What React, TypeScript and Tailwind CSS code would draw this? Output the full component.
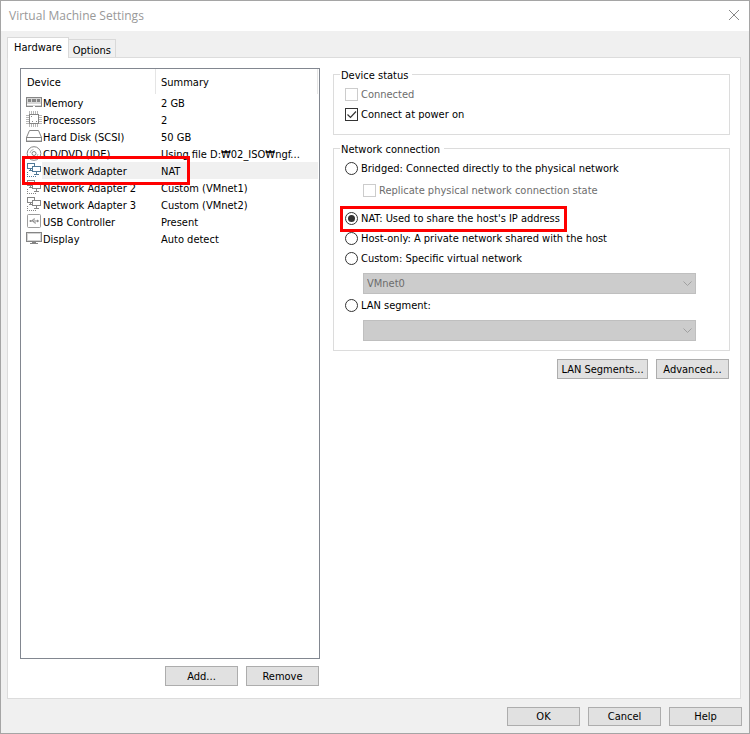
import { useState } from "react";
import type { ReactNode } from "react";
import clsx from "clsx";

function Icon({ children, active }: { children: ReactNode; active?: boolean }) {
  return (
    <svg
      viewBox="0 0 16 16"
      className={clsx("block h-4 w-4 shrink-0", active ? "text-[#4f7896]" : "text-[#858585]")}
      fill="none"
      stroke="currentColor"
      shapeRendering="crispEdges"
      aria-hidden="true"
    >
      {children}
    </svg>
  );
}

const memoryIcon = (
  <>
    <path d="M0.5 3.5h15v9H0.5z" fill="#d8d8d8" />
    <path d="M2 5h3v3H2zM6 5h4v3H6zM11 5h3v3h-3z" fill="currentColor" stroke="none" />
    <path d="M1 10.5h14" stroke="white" />
    <path d="M7 12.5h2" stroke="white" />
  </>
);

const processorIcon = (
  <>
    <path d="M3.5 3.5h9v9h-9z" />
    <path d="M3.5 0v3M5.5 0v3M7.5 0v3M9.5 0v3M11.5 0v3M3.5 13v3M5.5 13v3M7.5 13v3M9.5 13v3M11.5 13v3" strokeOpacity="0.6" />
    <path d="M0 4.5h3M0 6.5h3M0 8.5h3M0 10.5h3M0 12.5h3M13 4.5h3M13 6.5h3M13 8.5h3M13 10.5h3M13 12.5h3" strokeOpacity="0.6" />
    <path d="M5 5.5h1M10 10.5h1M6 10.5h1" />
  </>
);

const diskIcon = (
  <>
    <path d="M3.5 2.5h9l3 7h-15z" shapeRendering="auto" />
    <path d="M0.5 9.5h15v4H0.5z" />
    <path d="M1 12.5h14" strokeOpacity="0.4" />
  </>
);

const discIcon = (
  <g shapeRendering="auto">
    <circle cx="8" cy="8.5" r="6.8" />
    <circle cx="8" cy="8.5" r="2" />
    <path d="M4 8a4 4 0 0 1 3.5-3.5M12 9a4 4 0 0 1-3.5 3.5" strokeOpacity="0.6" />
  </g>
);

const networkIcon = (
  <>
    <path d="M1.5 1.5h7v5h-7z" />
    <path d="M4.5 7v2M3 8.5h3" />
    <path d="M6.5 4.5h8v5h-8z" fill="white" />
    <path d="M10.5 10v2M8 12.5h5" />
    <path d="M1.5 10v5M1 14.5h9" strokeDasharray="1 1" />
  </>
);

const usbIcon = (
  <>
    <rect x="1.5" y="1.5" width="13" height="13" rx="1" shapeRendering="auto" strokeOpacity="0.8" />
    <g shapeRendering="auto">
      <path d="M4 8h8.5M6 8l1.5-2H9M7 8l1.5 2H10" />
      <circle cx="4.5" cy="8" r="1" fill="currentColor" stroke="none" />
      <path d="M11 6.5L13 8l-2 1.5z" fill="currentColor" stroke="none" />
    </g>
  </>
);

const displayIcon = (
  <>
    <path d="M0.5 2.5h15v9H0.5z" />
    <path d="M1.5 3.5h13v7h-13z" strokeOpacity="0.35" />
    <path d="M6 12.5h4M4 13.5h8" />
  </>
);

const devices = [
  { name: "Memory", summary: "2 GB", icon: memoryIcon },
  { name: "Processors", summary: "2", icon: processorIcon },
  { name: "Hard Disk (SCSI)", summary: "50 GB", icon: diskIcon },
  { name: "CD/DVD (IDE)", summary: "Using file D:₩02_ISO₩ngf...", icon: discIcon },
  { name: "Network Adapter", summary: "NAT", icon: networkIcon },
  { name: "Network Adapter 2", summary: "Custom (VMnet1)", icon: networkIcon },
  { name: "Network Adapter 3", summary: "Custom (VMnet2)", icon: networkIcon },
  { name: "USB Controller", summary: "Present", icon: usbIcon },
  { name: "Display", summary: "Auto detect", icon: displayIcon },
];

// Red frame that points out a setting
function Highlight({ className }: { className: string }) {
  return (
    <div
      className={clsx("pointer-events-none absolute border-3 border-[#ff0000]", className)}
      aria-hidden="true"
    />
  );
}

type ButtonProps = { children: ReactNode; className?: string };

function Button({ children, className = "h-5 w-[73px]" }: ButtonProps) {
  return (
    <button
      type="button"
      className={clsx(
        "flex items-center justify-center border border-[#adadad] bg-[#e1e1e1] whitespace-nowrap",
        className
      )}
    >
      {children}
    </button>
  );
}

function DeviceList() {
  const [selected, setSelected] = useState("Network Adapter");

  return (
    <div className="relative flex-1 border border-[#828790] bg-white">
      <table className="w-full table-fixed border-separate border-spacing-0 text-left leading-[15px]">
        <thead>
          <tr className="h-[25px]">
            <th className="w-[135px] border-r border-[#e5e5e5] p-0 pt-0.5 pl-1.5 font-normal">Device</th>
            <th className="border-r border-[#e5e5e5] p-0 pt-0.5 pl-[5px] font-normal">Summary</th>
            <th className="w-px p-0" />
          </tr>
        </thead>
        <tbody>
          {devices.map((d) => {
            const active = d.name === selected;
            return (
              <tr key={d.name} className="h-[17px]" onClick={() => setSelected(d.name)}>
                <td className="p-0 pl-[5px]">
                  <div className="flex items-start">
                    <Icon active={active}>{d.icon}</Icon>
                    <span
                      className={clsx("flex-1 pt-0.5 pl-px whitespace-nowrap", active && "bg-[#f0f0f0]")}
                    >
                      {d.name}
                    </span>
                  </div>
                </td>
                <td
                  className={clsx(
                    "overflow-hidden p-0 pt-0.5 pl-[5px] whitespace-nowrap",
                    active && "bg-[#f0f0f0]"
                  )}
                >
                  {d.summary}
                </td>
                <td className="p-0" />
              </tr>
            );
          })}
        </tbody>
      </table>
      <Highlight className="top-[87px] left-px h-[29px] w-[168px]" />
    </div>
  );
}

function CheckBox({ label, checked, disabled }: { label: string; checked?: boolean; disabled?: boolean }) {
  return (
    <label className={clsx("flex h-[19px] items-center gap-[3px]", disabled && "text-[#6d6d6d]")}>
      <span className="relative flex">
        <input
          type="checkbox"
          defaultChecked={checked}
          disabled={disabled}
          className="peer h-[13px] w-[13px] appearance-none border border-[#333333] bg-white disabled:border-[#cccccc]"
        />
        <svg
          viewBox="0 0 13 13"
          className="pointer-events-none absolute inset-0 hidden h-[13px] w-[13px] peer-checked:block"
          fill="none"
          stroke="#333333"
          aria-hidden="true"
        >
          <path d="M2.5 6.5l3 3 5.5-6" strokeWidth="1.2" />
        </svg>
      </span>
      {label}
    </label>
  );
}

type RadioProps = {
  label: string;
  value: string;
  current: string;
  onSelect: (value: string) => void;
};

function Radio({ label, value, current, onSelect }: RadioProps) {
  return (
    <label className="flex h-[19px] items-center gap-[3px] whitespace-nowrap">
      <span className="relative flex">
        <input
          type="radio"
          name="network"
          value={value}
          checked={current === value}
          onChange={() => onSelect(value)}
          className="peer h-[13px] w-[13px] appearance-none rounded-full border border-[#333333] bg-white"
        />
        <span className="pointer-events-none absolute inset-[3px] hidden rounded-full bg-[#333333] peer-checked:block" />
      </span>
      {label}
    </label>
  );
}

function DisabledSelect({ label, value }: { label: string; value: string }) {
  return (
    <div className="relative mt-[5px] mr-[27px] ml-[18px]">
      <select
        disabled
        aria-label={label}
        className="block h-[21px] w-full appearance-none border border-[#bfbfbf] bg-[#cccccc] px-[3px] text-[#6d6d6d] opacity-100"
      >
        <option>{value}</option>
      </select>
      <svg
        viewBox="0 0 9 5"
        className="pointer-events-none absolute top-2 right-1 h-[5px] w-[9px]"
        fill="none"
        stroke="#a0a0a0"
        aria-hidden="true"
      >
        <path d="M0.5 0.5l4 4 4-4" />
      </svg>
    </div>
  );
}

function Group({ title, children }: { title: string; children: ReactNode }) {
  return (
    <fieldset className="border border-[#dcdcdc] px-1.5 pb-[9px]">
      <legend className="pt-0.5 pr-1 pl-px leading-[13px]">{title}</legend>
      <div className="pt-[3px] pl-[5px]">{children}</div>
    </fieldset>
  );
}

function AdapterSettings() {
  const [mode, setMode] = useState("nat");

  return (
    <div className="flex flex-1 flex-col gap-1.5">
      <Group title="Device status">
        <div className="flex flex-col gap-px pb-px">
          <CheckBox label="Connected" disabled />
          <CheckBox label="Connect at power on" checked />
        </div>
      </Group>

      <Group title="Network connection">
        <Radio
          label="Bridged: Connected directly to the physical network"
          value="bridged"
          current={mode}
          onSelect={setMode}
        />
        <div className="mt-[3px] ml-[18px]">
          <CheckBox label="Replicate physical network connection state" disabled />
        </div>
        <div className="relative mt-[9px]">
          <Radio
            label="NAT: Used to share the host's IP address"
            value="nat"
            current={mode}
            onSelect={setMode}
          />
          <Highlight className="-top-[3px] -left-[5px] h-[26px] w-[227px]" />
        </div>
        <div className="mt-px">
          <Radio
            label="Host-only: A private network shared with the host"
            value="host"
            current={mode}
            onSelect={setMode}
          />
        </div>
        <div className="mt-px">
          <Radio
            label="Custom: Specific virtual network"
            value="custom"
            current={mode}
            onSelect={setMode}
          />
        </div>
        <DisabledSelect label="Virtual network" value="VMnet0" />
        <div className="mt-0.5">
          <Radio label="LAN segment:" value="lan" current={mode} onSelect={setMode} />
        </div>
        <DisabledSelect label="LAN segment" value="" />
      </Group>

      <div className="mt-0.5 flex justify-end gap-2 pr-px">
        <Button className="h-5 w-[91px]">LAN Segments...</Button>
        <Button>Advanced...</Button>
      </div>
    </div>
  );
}

export default function App() {
  return (
    <div className="flex min-h-screen flex-col border border-[#a5a5a5] bg-[#f0f0f0] font-['DejaVu_Sans_Condensed','Noto_Sans_CJK_KR',sans-serif] text-[11px] leading-[17px] text-black">
      <header className="flex h-[30px] items-center justify-between bg-white pr-[9px] pb-0.5 pl-2">
        <h1 className="font-['Open_Sans',sans-serif] text-[12px] text-[#999999]">Virtual Machine Settings</h1>
        <button type="button" aria-label="Close">
          <svg viewBox="0 0 12 12" className="block h-3 w-3" fill="none" stroke="#888888" aria-hidden="true">
            <path d="M1 1l10 10M11 1L1 11" />
          </svg>
        </button>
      </header>

      <main className="flex flex-1 flex-col pt-1.5 pr-2 pl-1.5">
        <div role="tablist" className="flex items-end">
          <button
            type="button"
            role="tab"
            aria-selected="true"
            className="relative z-10 -mb-px h-[21px] border border-b-0 border-[#d9d9d9] bg-white px-1.5 pb-0.5"
          >
            Hardware
          </button>
          <button
            type="button"
            role="tab"
            aria-selected="false"
            className="h-[18px] border border-b-0 border-l-0 border-[#d9d9d9] bg-[#f0f0f0] px-1 pt-0.5"
          >
            Options
          </button>
        </div>

        <div
          role="tabpanel"
          className="flex flex-1 gap-[13px] border border-[#dcdcdc] bg-white pt-[9px] pr-2.5 pb-3 pl-3"
        >
          <div className="flex w-[300px] shrink-0 flex-col pt-px">
            <DeviceList />
            <div className="mt-[7px] flex justify-end gap-2 pr-px">
              <Button>Add...</Button>
              <Button>Remove</Button>
            </div>
          </div>
          <AdapterSettings />
        </div>
      </main>

      <footer className="flex justify-end gap-2 px-[7px] pt-2 pb-[7px]">
        <Button className="h-[19px] w-[73px]">OK</Button>
        <Button className="h-[19px] w-[73px]">Cancel</Button>
        <Button className="h-[19px] w-[73px]">Help</Button>
      </footer>
    </div>
  );
}
